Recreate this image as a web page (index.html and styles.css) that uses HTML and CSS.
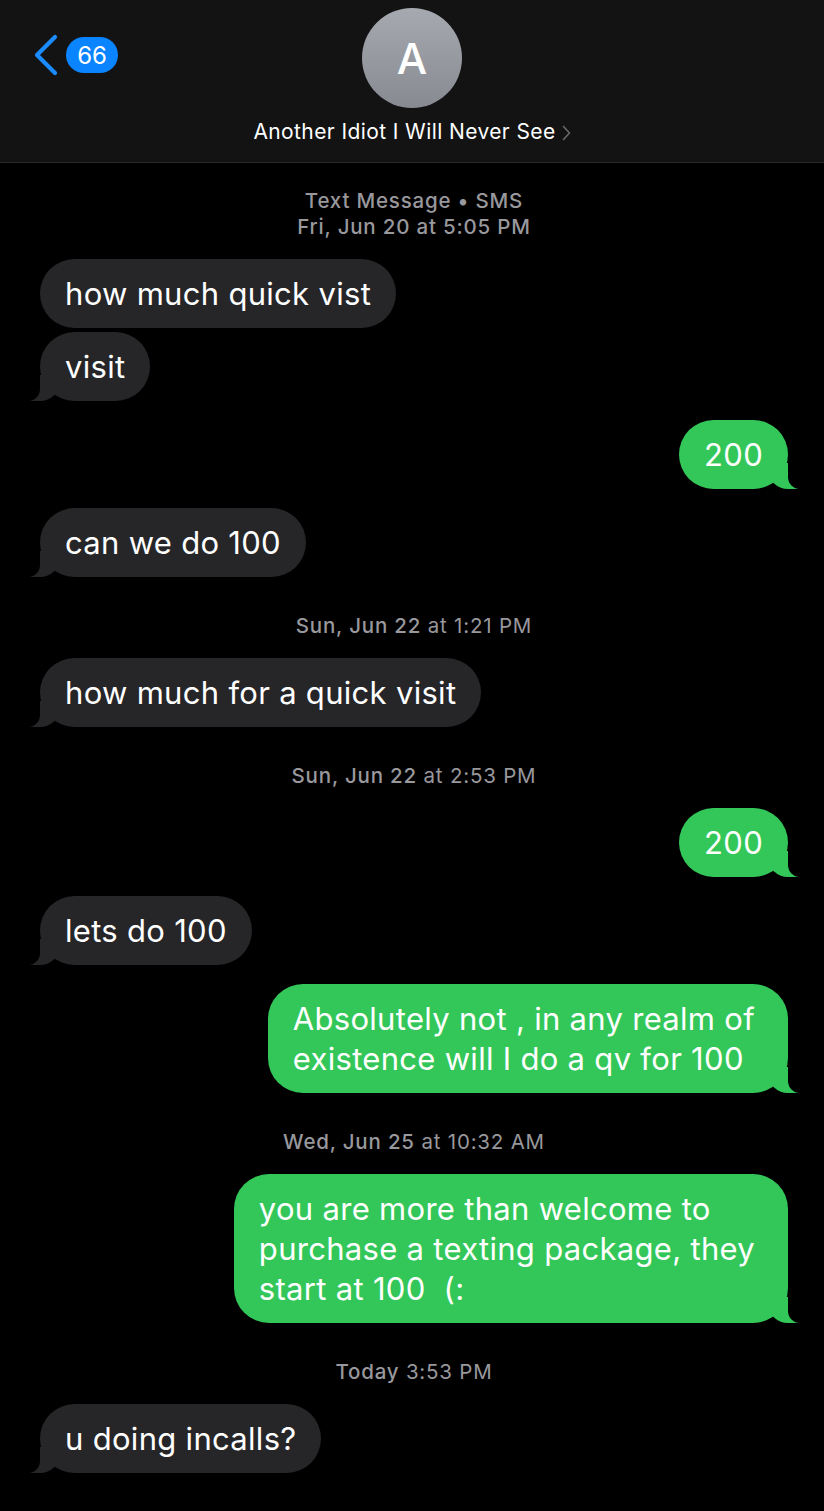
FILE: index.html
```html
<!DOCTYPE html>
<html lang="en">
<head>
<meta charset="utf-8">
<title>Messages</title>
<link rel="stylesheet" href="styles.css">
</head>
<body>
<div class="screen">
  <header class="header">
    <div class="back">
      <svg class="chev" width="26" height="42" viewBox="0 0 26 42"><polyline points="22,3 4,21 22,39" fill="none" stroke="#1a8cff" stroke-width="4.2" stroke-linecap="round" stroke-linejoin="round"/></svg>
      <span class="badge">66</span>
    </div>
    <div class="contact">
      <div class="avatar">A</div>
      <div class="name">Another Idiot I Will Never See<svg class="name-chev" width="9" height="16" viewBox="0 0 9 16"><polyline points="1.5,1.5 7.5,8 1.5,14.5" fill="none" stroke="#6b6b70" stroke-width="1.5" stroke-linecap="round" stroke-linejoin="round"/></svg></div>
    </div>
    <div class="spacer"></div>
  </header>

  <main class="thread">
    <div class="stamp first">
      <div class="stamp-line">Text Message • SMS</div>
      <div class="stamp-line"><b>Fri, Jun 20</b> at 5:05 PM</div>
    </div>

    <div class="group in">
      <div class="bubble">how much quick vist</div>
      <div class="bubble tail">visit</div>
    </div>

    <div class="group out">
      <div class="bubble tail">200</div>
    </div>

    <div class="group in">
      <div class="bubble tail">can we do 100</div>
    </div>

    <div class="stamp"><b>Sun, Jun 22</b> at 1:21 PM</div>

    <div class="group in">
      <div class="bubble tail">how much for a quick visit</div>
    </div>

    <div class="stamp"><b>Sun, Jun 22</b> at 2:53 PM</div>

    <div class="group out">
      <div class="bubble tail">200</div>
    </div>

    <div class="group in">
      <div class="bubble tail">lets do 100</div>
    </div>

    <div class="group out">
      <div class="bubble tail multi">Absolutely not , in any realm of<br>existence will I do a qv for 100</div>
    </div>

    <div class="stamp"><b>Wed, Jun 25</b> at 10:32 AM</div>

    <div class="group out">
      <div class="bubble tail multi">you are more than welcome to<br>purchase a texting package, they<br>start at 100&nbsp;&nbsp;(:</div>
    </div>

    <div class="stamp"><b>Today</b> 3:53 PM</div>

    <div class="group in">
      <div class="bubble tail">u doing incalls?</div>
    </div>
  </main>
</div>
</body>
</html>
```

FILE: styles.css
```css
* { box-sizing: border-box; }

html, body {
  margin: 0;
  padding: 0;
  background: #000;
}

body {
  font-family: Inter, "Noto Sans", "Liberation Sans", sans-serif;
  color: #fff;
  width: 824px;
  min-height: 1511px;
}

.screen {
  display: flex;
  flex-direction: column;
}

/* Header */
.header {
  display: grid;
  grid-template-columns: 1fr auto 1fr;
  background: #131313;
  border-bottom: 1px solid #2a2a2c;
  height: 163px;
}

.back {
  display: flex;
  align-items: center;
  gap: 7px;
  padding: 34px 0 0 33px;
  align-self: start;
}

.chev { display: block; }

.badge {
  display: flex;
  align-items: center;
  justify-content: center;
  height: 36px;
  min-width: 52px;
  padding: 0 10px;
  border-radius: 18px;
  background: #0a84ff;
  color: #fff;
  font-size: 24px;
  font-weight: 400;
  letter-spacing: -0.2px;
}

.contact {
  display: flex;
  flex-direction: column;
  align-items: center;
  padding-top: 8px;
}

.avatar {
  width: 100px;
  height: 100px;
  border-radius: 50%;
  background: linear-gradient(180deg, #a6a9b0 0%, #878a91 100%);
  display: flex;
  align-items: center;
  justify-content: center;
  font-size: 43px;
  font-weight: 500;
  color: #fff;
}

.name {
  margin-top: 12px;
  font-size: 21px;
  line-height: 24px;
  letter-spacing: 0.4px;
  color: #fff;
  display: flex;
  align-items: center;
  gap: 6px;
}

.name-chev { display: block; margin-top: 1px; }

/* Thread */
.thread {
  display: flex;
  flex-direction: column;
  padding: 0 36px 0 40px;
}

.stamp {
  text-align: center;
  color: #98989d;
  font-size: 20.5px;
  line-height: 26px;
  letter-spacing: 0.8px;
  margin: 17px 0 19px;
}

.stamp b { font-weight: 500; }

.stamp.first { margin: 25px 0 19px; font-weight: 500; }
.stamp.first b { font-weight: 500; }

.group {
  display: flex;
  flex-direction: column;
  gap: 4px;
  margin-bottom: 19px;
}

.group.in { align-items: flex-start; }
.group.out { align-items: flex-end; }

.bubble {
  position: relative;
  font-size: 31px;
  line-height: 40px;
  letter-spacing: 0.3px;
  padding: 14.5px 25px;
  border-radius: 35px;
  color: #fff;
}

.bubble.multi { padding-right: 33px; }

.in .bubble { background: #262629; }
.out .bubble { background: #33c759; }

/* Tails */
.bubble.tail::before,
.bubble.tail::after {
  content: "";
  position: absolute;
  bottom: 0;
  height: 26px;
}

.in .bubble.tail::before {
  left: -10px;
  width: 30px;
  background: #262629;
  border-bottom-right-radius: 20px;
}
.in .bubble.tail::after {
  left: -14px;
  width: 14px;
  background: #000;
  border-bottom-right-radius: 12px;
}

.out .bubble.tail::before {
  right: -10px;
  width: 30px;
  background: #33c759;
  border-bottom-left-radius: 20px;
}
.out .bubble.tail::after {
  right: -14px;
  width: 14px;
  background: #000;
  border-bottom-left-radius: 12px;
}
```
